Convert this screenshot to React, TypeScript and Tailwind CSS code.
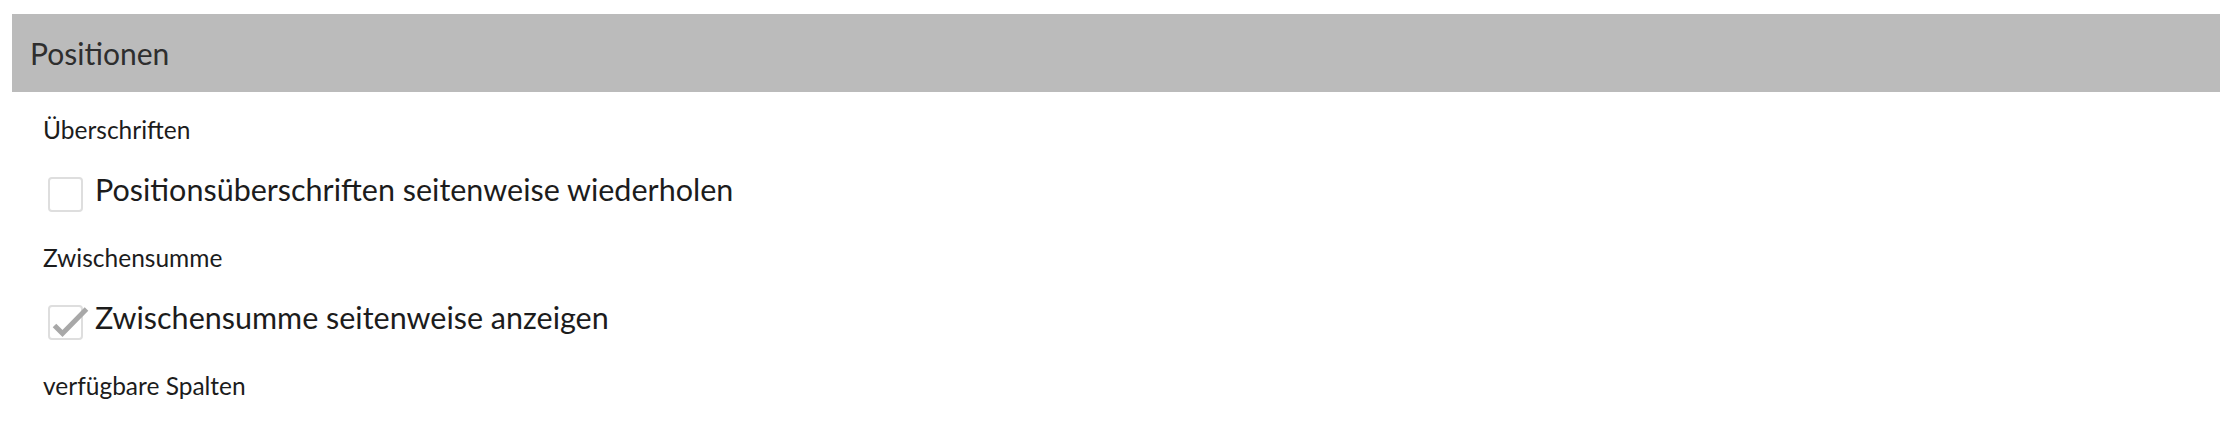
const font = { fontFamily: '"Lato", "Open Sans", sans-serif' };

function Checkbox({ checked }: { checked?: boolean }) {
  return (
    <div className="relative mt-[6px] ml-[5px] h-[35px] w-[35px] shrink-0 rounded-[4px] border-2 border-[#dedede] bg-white">
      {checked && (
        <svg
          className="absolute -left-[2px] -top-[2px] overflow-visible"
          width="35"
          height="35"
          viewBox="0 0 35 35"
          fill="none"
        >
          <path
            d="M6.5 20.5 L14.5 28.5 L38.5 4"
            stroke="#a8a8a8"
            strokeWidth="5"
            strokeLinecap="butt"
            strokeLinejoin="miter"
          />
        </svg>
      )}
    </div>
  );
}

function Group({
  label,
  text,
  checked,
}: {
  label: string;
  text: string;
  checked?: boolean;
}) {
  return (
    <div className="flex flex-col">
      <div className="h-[30px] text-[24.5px] leading-[30px] text-[#1c1c1c]">{label}</div>
      <div className="mt-[26px] flex items-start gap-[12px]">
        <Checkbox checked={checked} />
        <span className="text-[30.5px] leading-[36px] text-[#1c1c1c]">{text}</span>
      </div>
    </div>
  );
}

export default function App() {
  return (
    <div className="min-h-[430px] w-full bg-white pt-[14px] pl-[12px] pr-[14px]" style={font}>
      {/* section header */}
      <div className="flex h-[78px] items-center bg-[#bbbbbb] pl-[18px]">
        <span className="text-[30px] leading-[36px] text-[#2e2e2e]">Positionen</span>
      </div>

      <div className="mt-[23px] flex flex-col gap-[31px] pl-[31px]">
        <Group label="Überschriften" text="Positionsüberschriften seitenweise wiederholen" />
        <Group label="Zwischensumme" text="Zwischensumme seitenweise anzeigen" checked />
        <div className="h-[30px] text-[24.5px] leading-[30px] text-[#1c1c1c]">verfügbare Spalten</div>
      </div>
    </div>
  );
}
